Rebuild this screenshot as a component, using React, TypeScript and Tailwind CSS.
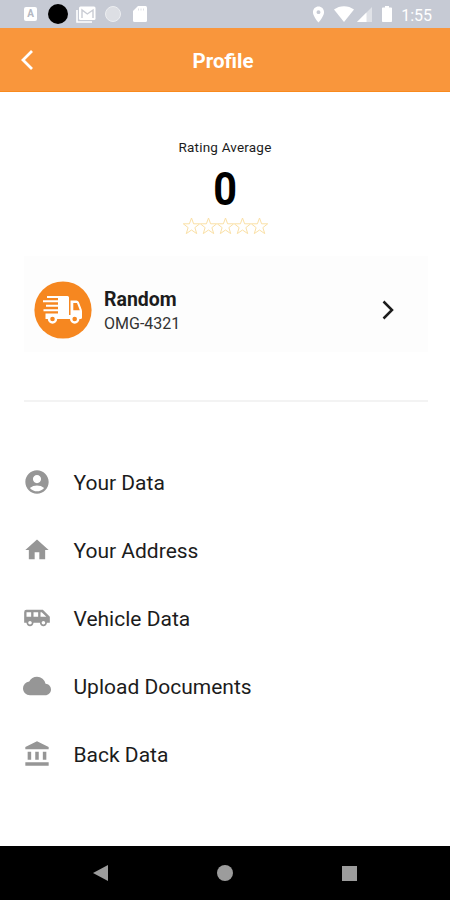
import type { IconType } from 'react-icons';
import {
  MdAccountBalance,
  MdAccountCircle,
  MdAirportShuttle,
  MdCloud,
  MdHome,
  MdLocationOn,
} from 'react-icons/md';

interface MenuItem {
  label: string;
  icon: IconType;
}

const menuItems: MenuItem[] = [
  { label: 'Your Data', icon: MdAccountCircle },
  { label: 'Your Address', icon: MdHome },
  { label: 'Vehicle Data', icon: MdAirportShuttle },
  { label: 'Upload Documents', icon: MdCloud },
  { label: 'Back Data', icon: MdAccountBalance },
];

function StatusBar() {
  return (
    <div className="flex h-7 shrink-0 items-center justify-between bg-[#c6cad4] pl-6 pr-[18px] text-white">
      <div className="flex items-center">
        <div className="flex h-[14px] w-[13px] items-center justify-center rounded-[2px] bg-white text-[10px] font-bold leading-none text-[#b4b8c2]">
          A
        </div>
        <div className="ml-[11px] size-5 rounded-full bg-black" />
        <svg className="ml-2 h-[17px] w-5" viewBox="0 0 20 17">
          <path d="M1 4v12h15" fill="none" stroke="currentColor" strokeWidth="1.6" />
          <rect x="3" y="0.5" width="16.5" height="13.5" rx="1.5" fill="currentColor" />
          <path d="M6 12V4l5.3 4L17 4v8" fill="none" stroke="#c9ccd4" strokeWidth="1.4" />
        </svg>
        <div className="ml-[9px] size-4 rounded-full border border-[#eceef1] bg-[#dddfe4]" />
        <svg className="ml-3 h-4 w-[14px]" viewBox="0 0 14 16">
          <path d="M5 0h7.500Q14 0 14 1.500v13q0 1.500-1.500 1.500h-11Q0 16 0 14.500V5z" fill="currentColor" />
          <path d="M5.500 2.500v2M8 2.500v2M10.500 2.500v2" stroke="#dfe1e6" />
        </svg>
      </div>
      <div className="flex items-center">
        <MdLocationOn className="size-[19px]" />
        <svg className="ml-[6px] h-4 w-5" viewBox="0 0 20 16">
          <path d="M0 3.6C5.600-.9 14.400-.9 20 3.600L10 16z" fill="currentColor" />
        </svg>
        <svg className="ml-[3px] size-[15px]" viewBox="0 0 15 15">
          <path d="M15 0v15H0z" fill="currentColor" opacity="0.45" />
          <path d="M9.500 5.500V15H0z" fill="currentColor" />
        </svg>
        <svg className="ml-[10px] h-4 w-[10px]" viewBox="0 0 10 16">
          <path d="M3 0h4v1.500h2.200q.8 0 .8.800V15.200q0 .8-.8.800H.8Q0 16 0 15.200V2.300q0-.8.800-.8H3z" fill="currentColor" />
        </svg>
        <span className="ml-[9px] pt-[3px] text-base leading-none">1:55</span>
      </div>
    </div>
  );
}

function Star() {
  return (
    <svg className="h-[18px] w-[17px] overflow-visible" viewBox="0 0 17 18" fill="none" stroke="currentColor">
      <path d="M8.500 1L10.600 6.800H16.700L11.900 10.600L13.700 16.600L8.500 13L3.300 16.600L5.100 10.600L.3 6.800H6.400Z" />
    </svg>
  );
}

function TruckLogo() {
  return (
    <svg className="size-[58px] shrink-0" viewBox="0 0 58 58">
      <circle cx="29" cy="29" r="28.600" fill="#f68720" />
      <path
        d="M13 15H33.500Q35 15 35 16.500V38H11.500V32.500H24V30.200H9.500V28.200H24V25.800H12V23.800H24V21.200H9V19.200H24V17H13z"
        fill="#fff"
      />
      <path
        fillRule="evenodd"
        d="M36.500 19.500H42.500Q44 19.500 44.800 21L47.300 27.500Q48 28.800 48 30.500V36.500Q48 38 46.500 38H34V36H36.500zM39.300 22V29.300H45.800L43 22z"
        fill="#fff"
      />
      <path d="M20 36H38" stroke="#fff" strokeWidth="4" />
      <circle cx="18.500" cy="38" r="3.500" fill="#f68720" stroke="#fff" strokeWidth="2.400" />
      <circle cx="40.700" cy="38" r="3.500" fill="#f68720" stroke="#fff" strokeWidth="2.400" />
    </svg>
  );
}

export default function App() {
  return (
    <div className="flex h-[900px] w-[450px] flex-col overflow-hidden bg-white font-['Roboto',sans-serif] text-[#1c1c1c]">
      <StatusBar />

      {/* Header */}
      <header className="grid h-16 shrink-0 grid-cols-[96px_1fr_96px] items-center border-b border-[#f98a1d] bg-[#f9963c] text-white">
        <button className="pl-[21px]">
          <svg className="h-5 w-3" viewBox="0 0 12 20" fill="none" stroke="currentColor" strokeWidth="2.800">
            <path d="M11 1L2 10l9 9" />
          </svg>
        </button>
        <h1 className="pt-[3px] pr-1 text-center text-[20.5px] font-bold">Profile</h1>
      </header>

      <main className="flex flex-1 flex-col px-6">
        {/* Rating */}
        <div className="mt-[46px] flex flex-col items-center">
          <div className="text-[13.5px] leading-[18px] tracking-[0.2px]">Rating Average</div>
          <div className="mt-[9px] scale-x-90 text-[46px] font-bold leading-[48px] text-black">0</div>
          <div className="mt-1 flex text-[#fae0a6]">
            {[1, 2, 3, 4, 5].map((star) => (
              <Star key={star} />
            ))}
          </div>
        </div>

        {/* Vehicle card */}
        <button className="mt-[21px] flex h-24 w-[404px] items-center bg-[#fdfdfd] pl-[10px] pr-[34px] pt-3 pb-px text-left">
          <TruckLogo />
          <div className="ml-3 flex-1 pt-1">
            <div className="text-[19.5px] font-bold leading-6">Random</div>
            <div className="text-base leading-6 text-[#333]">OMG-4321</div>
          </div>
          <svg className="h-5 w-3" viewBox="0 0 12 20" fill="none" stroke="#1c1c1c" strokeWidth="2.500">
            <path d="M1.500 1.500L10 10l-8.500 8.500" />
          </svg>
        </button>

        <hr className="mt-12 w-[404px] border-t-2 border-[#f3f3f3]" />

        {/* Menu */}
        <nav className="mt-[46px] flex flex-col">
          {menuItems.map(({ label, icon: Icon }) => (
            <a key={label} className="flex h-[68px] items-center">
              <Icon className="-ml-[1.5px] mb-px size-7 text-[#969696]" />
              <span className="ml-[23px] pt-[3px] text-[21px]">{label}</span>
            </a>
          ))}
        </nav>
      </main>

      {/* System navigation */}
      <footer className="flex h-[54px] shrink-0 items-center justify-between bg-black pl-[93px] pr-[93px] text-[#9c9c9c]">
        <svg className="h-4 w-[15px]" viewBox="0 0 15 16">
          <path d="M15 0v16L0 8z" fill="currentColor" />
        </svg>
        <div className="size-4 rounded-full bg-[#9c9c9c]" />
        <div className="size-[15px] bg-[#9c9c9c]" />
      </footer>
    </div>
  );
}
